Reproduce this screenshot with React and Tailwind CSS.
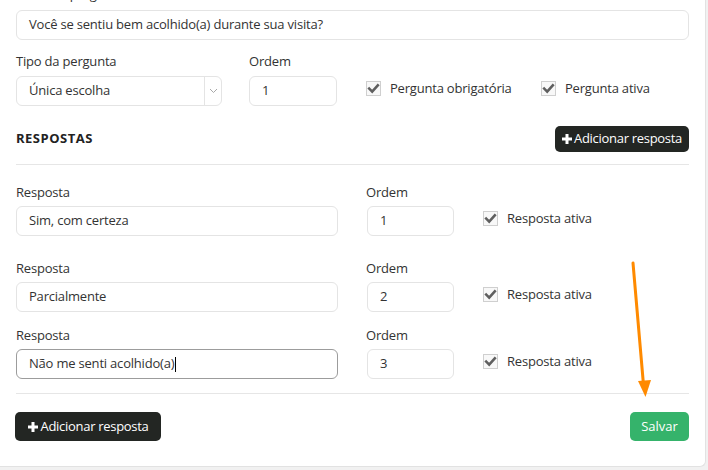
import React from "react";

const font = { fontFamily: '"Open Sans", "Noto Sans", Arial, sans-serif' };

function Check() {
  return (
    <div className="w-[15px] h-[15px] border border-[#cfcfcf] bg-[#f8f8f8] flex items-center justify-center shrink-0">
      <svg width="13" height="13" viewBox="0 0 13 13">
        <path d="M2.2 6.6 L5.2 9.6 L10.8 3.4" fill="none" stroke="#5f5f5f" strokeWidth="2.6" strokeLinecap="square" />
      </svg>
    </div>
  );
}

function Plus() {
  return (
    <svg width="10" height="10" viewBox="0 0 10 10" className="shrink-0">
      <rect x="3.5" y="0" width="3" height="10" fill="white" />
      <rect x="0" y="3.5" width="10" height="3" fill="white" />
    </svg>
  );
}

function Field({ children, className = "", focused = false }) {
  return (
    <div
      className={
        "h-[30px] rounded-[6px] border bg-white flex items-center pl-[12px] text-[13px] tracking-[-0.2px] text-[#333] " +
        (focused ? "border-[#9c9c9c] " : "border-[#e4e4e4] ") +
        className
      }
    >
      {children}
    </div>
  );
}

function Label({ children, className = "" }) {
  return <div className={"text-[13px] tracking-[-0.2px] leading-[18px] text-[#333] " + className}>{children}</div>;
}

function AnswerRow({ text, order, className = "", focused = false }) {
  return (
    <div className={"flex items-start " + className}>
      <div className="w-[322px]">
        <Label className="mb-[5px]">Resposta</Label>
        <Field focused={focused}>
          {text}
          {focused && <span className="inline-block w-px h-[15px] bg-black ml-px" />}
        </Field>
      </div>
      <div className="w-[88px] ml-[28px]">
        <Label className="mb-[5px]">Ordem</Label>
        <Field className="ml-px">{order}</Field>
      </div>
      <div className="ml-[29px] mt-[26px] flex items-center gap-[9px] text-[13px] tracking-[-0.2px] text-[#333]">
        <Check />
        <span>Resposta ativa</span>
      </div>
    </div>
  );
}

export default function App() {
  return (
    <div className="w-[708px] h-[470px] bg-[#f1f1f1] overflow-hidden relative" style={font}>
      <div className="w-[706px] h-[467px] bg-white border-r border-b border-[#e2e2e2] rounded-br-[6px] overflow-hidden">
        <div className="pl-4 pr-4">
          <Label className="-mt-[15px] mb-[7px]">Texto da pergunta</Label>
          <Field className="h-[30px]">Você se sentiu bem acolhido(a) durante sua visita?</Field>

          <div className="flex items-start mt-[12px]">
            <div className="w-[206px]">
              <Label className="mb-[6px]">Tipo da pergunta</Label>
              <div className="h-[30px] rounded-[6px] border border-[#e4e4e4] flex items-center text-[13px] tracking-[-0.2px] text-[#333]">
                <span className="pl-[12px] flex-1">Única escolha</span>
                <div className="w-[17px] h-full border-l border-[#e4e4e4] flex items-center justify-center">
                  <svg width="9" height="6" viewBox="0 0 9 6">
                    <path d="M1 1 L4.5 4.5 L8 1" fill="none" stroke="#a8a8a8" strokeWidth="1" />
                  </svg>
                </div>
              </div>
            </div>
            <div className="w-[88px] ml-[27px]">
              <Label className="mb-[6px]">Ordem</Label>
              <Field>1</Field>
            </div>
            <div className="ml-[29px] mt-[27px] flex items-center text-[13px] tracking-[-0.2px] text-[#333]">
              <div className="w-[175px] flex items-center gap-[9px]">
                <Check />
                <span>Pergunta obrigatória</span>
              </div>
              <div className="flex items-center gap-[9px]">
                <Check />
                <span>Pergunta ativa</span>
              </div>
            </div>
          </div>

          <div className="flex items-center justify-between mt-[20px] h-[26px]">
            <div className="text-[13px] font-bold text-[#222] tracking-[0.5px]">RESPOSTAS</div>
            <button className="h-[26px] w-[134px] rounded-[5px] bg-[#232623] text-white text-[13px] flex items-center justify-center gap-[2px] tracking-[-0.3px]">
              <Plus />
              <span>Adicionar resposta</span>
            </button>
          </div>

          <div className="mt-[12px] border-t border-[#e6e6e6]" />

          <AnswerRow className="mt-[18px]" text="Sim, com certeza" order="1" />
          <AnswerRow className="mt-[23px]" text="Parcialmente" order="2" />
          <AnswerRow className="mt-[14px]" text="Não me senti acolhido(a)" order="3" focused />

          <div className="mt-[14px] border-t border-[#e6e6e6]" />

          <div className="flex items-center justify-between mt-[18px]">
            <button className="-ml-px h-[29px] w-[146px] rounded-[5px] bg-[#232623] text-white text-[13px] flex items-center justify-center gap-[3px] tracking-[-0.3px]">
              <Plus />
              <span>Adicionar resposta</span>
            </button>
            <button className="h-[29px] w-[59px] rounded-[5px] bg-[#35b36b] text-white text-[13px] flex items-center justify-center">
              Salvar
            </button>
          </div>
        </div>
      </div>

      <svg className="absolute left-0 top-0 pointer-events-none" width="708" height="470">
        <line x1="633" y1="263" x2="643.5" y2="385" stroke="#ff8a00" strokeWidth="3" strokeLinecap="round" />
        <polygon points="638,381 651,380 645.5,397" fill="#ff8a00" />
      </svg>
    </div>
  );
}
